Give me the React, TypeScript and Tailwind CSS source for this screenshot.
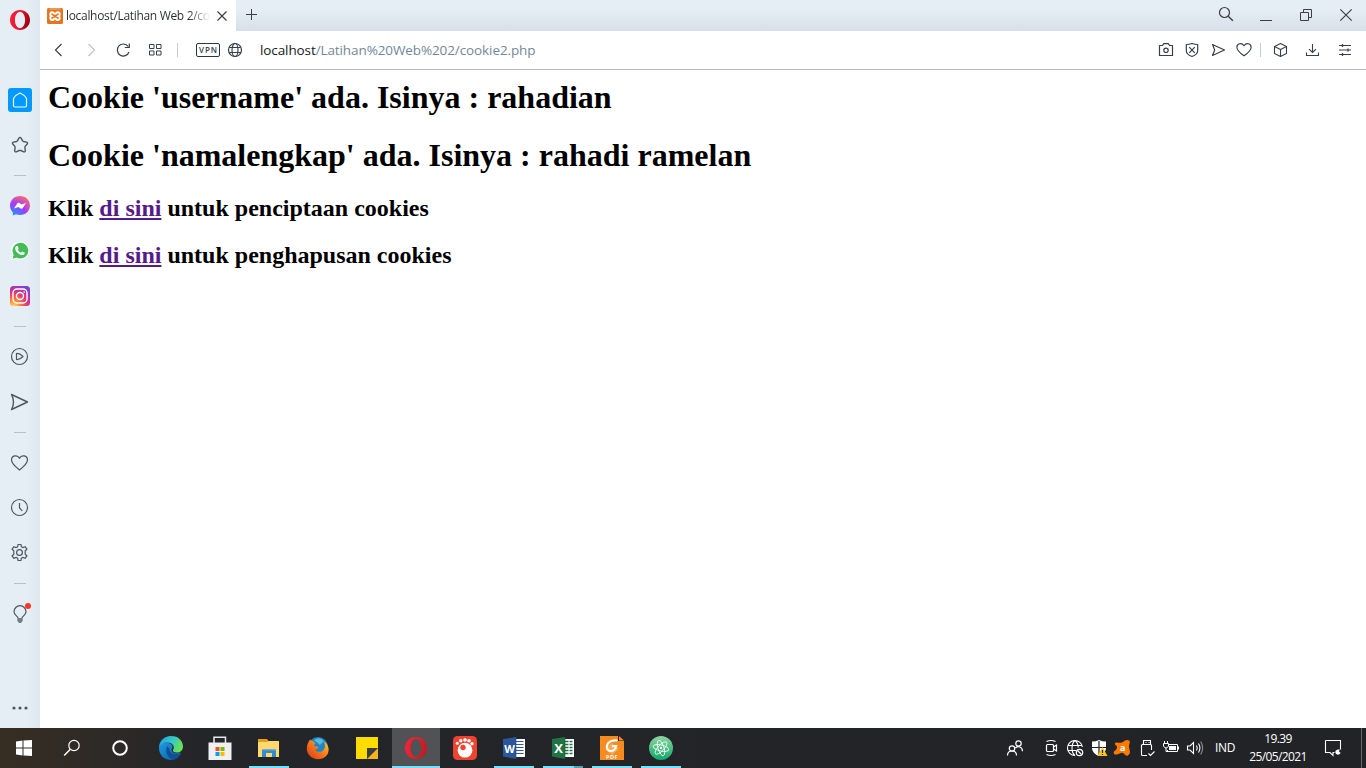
import React from "react";

type IconProps = { children: React.ReactNode; className?: string };

function Icon({ children, className = "" }: IconProps) {
  return (
    <svg width="24" height="24" viewBox="0 0 24 24" fill="none" stroke="currentColor" strokeWidth="1.2" className={`block shrink-0 ${className}`}>
      {children}
    </svg>
  );
}

function OperaLogo({ id, big = false }: { id: string; big?: boolean }) {
  return (
    <Icon>
      <defs>
        <linearGradient id={id} x1="0" y1="0" x2="1" y2="0.3">
          <stop offset="0" stopColor="#ff2038" />
          <stop offset="0.55" stopColor={big ? "#e3202c" : "#ec1530"} />
          <stop offset="1" stopColor={big ? "#c51a22" : "#a00414"} />
        </linearGradient>
      </defs>
      <path
        transform={big ? "translate(-1.2 -1.2) scale(1.1)" : undefined}
        stroke="none"
        fill={`url(#${id})`}
        fillRule="evenodd"
        d="M12 2C6.400 2 2 6.400 2 12s4.400 10 10 10 10-4.400 10-10S17.600 2 12 2Zm0 1.800c2.900 0 5.100 3.700 5.100 8.200s-2.200 8.200-5.100 8.200S6.900 16.500 6.900 12 9.100 3.800 12 3.800Z"
      />
    </Icon>
  );
}

const heart = "M12 18.200C7.500 15 4.500 12.200 4.500 9.100c0-4 5.200-5.100 7.500-1.400 2.300-3.700 7.500-2.600 7.500 1.400 0 3.100-3 5.900-7.500 9.100Z";

function Divider() {
  return <div className="my-[18px] h-px w-3 shrink-0 bg-[#b3c3d0]" />;
}

function Sidebar() {
  return (
    <aside className="flex w-10 shrink-0 flex-col items-center bg-gradient-to-r from-[#e5edf5] from-65% to-[#dfe7ef] pt-2 text-[#4d5762]">
      <OperaLogo id="operaSide" />
      <div className="mt-14 flex size-6 shrink-0 rounded-[3px] bg-[#0099ff] text-white">
        <Icon><path d="M5.500 10.500Q8 6.500 12 5q4 1.500 6.500 5.500v7q0 1.500-1.500 1.500H7q-1.500 0-1.500-1.500Z" strokeLinejoin="round" /></Icon>
      </div>
      <Icon className="mt-[21px]">
        <path strokeLinejoin="round" strokeWidth="1.400" d="M10.900 5.200q1.100-1.600 2.200 0l1.500 2.700q.3.500.9.600l3 .6q1.700.5.700 1.900l-2 2.400q-.4.500-.3 1l.4 3.200q0 1.700-1.600 1.200l-2.900-1.300q-.8-.3-1.600 0l-2.900 1.300q-1.600.5-1.600-1.200l.4-3.200q.1-.5-.3-1L4.800 11q-1-1.400.7-1.900l3-.6q.6-.1.900-.6Z" />
      </Icon>
      <Divider />
      <Icon>
        <defs>
          <radialGradient id="msg" cx="0.2" cy="1" r="1.1">
            <stop offset="0" stopColor="#159bff" />
            <stop offset="0.55" stopColor="#a13cff" />
            <stop offset="1" stopColor="#ff6969" />
          </radialGradient>
        </defs>
        <path stroke="none" fill="url(#msg)" d="M12 2C6.300 2 2 6.100 2 11.600c0 3 1.200 5.300 2.900 7v3l3-1.300c1.300.5 2.600.8 4.100.8 5.700 0 10-4.100 10-9.500S17.700 2 12 2Z" />
        <path stroke="none" fill="#fff" d="m6 14.600 3.200-5q1-1.400 2.300-.5l1.900 1.500L18 9l-3.200 5q-1 1.400-2.300.4l-1.900-1.400Z" />
      </Icon>
      <Icon className="mt-[21px]">
        <path stroke="none" fill="#fff" d="m2.900 21.300 1.300-5.200a9 9 0 1 1 3.700 3.600Z" />
        <path stroke="none" fill="#42bd55" d="m4.600 19.700 1-4a7.900 7.900 0 1 1 3 2.900Z" />
        <path stroke="none" fill="#fff" d="M8.500 7.100h1.200l1 2.400-.9 1.300c.8 1.400 1.900 2.400 3.400 3l1.100-1.300 2.500 1.200c-.2 2-1.600 2.600-3.100 2.300-3.600-.8-6.500-4.200-6.500-6.600 0-1 .6-2 1.300-2.300Z" />
      </Icon>
      <Icon className="mt-[21px]">
        <defs>
          <radialGradient id="insta" cx="0.2" cy="1" r="1.150">
            <stop offset="0" stopColor="#ffd65c" />
            <stop offset="0.3" stopColor="#ff7a35" />
            <stop offset="0.6" stopColor="#dc3181" />
            <stop offset="1" stopColor="#7145d9" />
          </radialGradient>
        </defs>
        <rect x="2" y="2" width="20" height="20" rx="3.500" stroke="none" fill="url(#insta)" />
        <g stroke="#fff" strokeWidth="1.400">
          <rect x="5" y="5" width="14" height="14" rx="4" />
          <circle cx="12" cy="12" r="3.500" />
          <path d="M15.500 8h1.300" />
        </g>
      </Icon>
      <Divider />
      <Icon>
        <circle cx="11.500" cy="11.500" r="8" />
        <path strokeLinejoin="round" d="M8.500 8.500q3-.5 6.500 3-3.500 3.500-6.500 3Z" />
      </Icon>
      <Icon className="mt-[21px]">
        <path strokeLinejoin="round" strokeWidth="1.400" d="m3.500 4.500 16 7.500-16 7.500q4-7.500 0-15Z" />
      </Icon>
      <Divider />
      <Icon>
        <path d="M11.500 19C7 15.500 3.500 12.500 3.500 9.100c0-4.700 6-5.900 8-1.800 2-4.100 8-2.900 8 1.800 0 3.400-3.500 6.400-8 9.900Z" strokeLinejoin="round" />
      </Icon>
      <Icon className="mt-[21px]">
        <circle cx="11.500" cy="11.500" r="8" />
        <path d="M11.500 7v5l2.800 2.800" />
      </Icon>
      <Icon className="mt-[21px]">
        <circle cx="11.500" cy="11.500" r="2.900" />
        <path strokeLinejoin="round" d="M9.700 5.700 10 3.500h3l.3 2.200 1.500.9 2.300-.9 1.800 2.500-1.700 1.500v3.600l1.700 1.500-1.800 2.500-2.300-.9-1.500.9-.3 2.200h-3l-.3-2.200-1.500-.9-2.300.9-1.800-2.500 1.700-1.500V9.700L4.100 8.200l1.800-2.500 2.300.9Z" />
      </Icon>
      <Divider />
      <Icon>
        <path d="M10 16C9.700 14.200 6 12.900 6 9.700a6 6 0 0 1 12 0c0 3.200-3.700 4.500-4 6.300" />
        <path stroke="none" fill="#737d87" d="M9.300 16h5.400v2.800L13 21h-2l-1.700-2.200Z" />
        <circle cx="20" cy="4" r="3" fill="#ff3528" stroke="none" />
      </Icon>
      <Icon className="mt-[70px]">
        <g stroke="none" fill="currentColor"><circle cx="6" cy="12" r="1.600" /><circle cx="12" cy="12" r="1.600" /><circle cx="18" cy="12" r="1.600" /></g>
      </Icon>
    </aside>
  );
}

function TabBar() {
  return (
    <div className="flex h-[31px] bg-gradient-to-b from-[#e5edf5] from-30% to-[#d7e0e8] text-[#3b4045]">
      <div className="flex h-[31px] w-[196px] items-center bg-white pl-[7px]">
        <svg width="16" height="16" viewBox="0 0 16 16" className="block shrink-0">
          <rect width="16" height="16" rx="1.500" fill="#e97420" />
          <path d="M2.500 1h11" stroke="#f5b98b" />
          <path d="M5 4.300c2 0 1.600 1.500 3 1.500s1-1.500 3-1.500 2.500 3 .4 3.900c2.100.9 1.600 3.900-.4 3.900s-1.600-1.500-3-1.500-1 1.500-3 1.500-2.500-3-.4-3.900C2.500 7.300 3 4.300 5 4.300Z" fill="none" stroke="#fff" strokeWidth="2" />
        </svg>
        <div className="ml-[3px] w-36 overflow-hidden bg-gradient-to-r from-[#292d31] from-85% to-white bg-clip-text font-['Open_Sans',sans-serif] text-[12px] tracking-[-0.32px] whitespace-nowrap text-transparent">localhost/Latihan Web 2/co</div>
        <Icon><path d="m7.500 7.500 9 9m0-9-9 9" /></Icon>
      </div>
      <Icon className="mt-[3px] ml-[3px]"><path strokeWidth="1" d="M12.500 6v11M7 11.500h11" /></Icon>
      <div className="ml-auto flex gap-4 pt-[3px] pr-2">
        <Icon><circle cx="10.500" cy="9.500" r="5" /><path d="m14.200 13.200 4.700 4.600" strokeWidth="1.500" /></Icon>
        <Icon><path strokeWidth="1" d="M6 17.500h12" /></Icon>
        <Icon><path strokeWidth="1" d="M6.500 9.500h8v8h-8ZM9.500 9.500v-3h8v8h-3" /></Icon>
        <Icon><path d="m6.300 6.300 11.400 11.400m0-11.400L6.300 17.700" /></Icon>
      </div>
    </div>
  );
}

function Toolbar() {
  return (
    <div className="flex h-[39px] items-center border-b border-[#b3bdc6] bg-white pr-[9px] pl-[7px] text-[#35404a]">
      <Icon><path d="m14.500 6-6 6 6 6" /></Icon>
      <Icon className="ml-2 text-[#bfc4c9]"><path d="m9.500 6 6 6-6 6" /></Icon>
      <Icon className="ml-2"><path d="M17.200 8.500A6 6 0 1 0 18 14M18.300 5.500v4h-4.500" /></Icon>
      <Icon className="ml-2"><path strokeWidth="1" d="M6.500 6.500H11v4H6.500ZM13.500 6.500h4.500v4h-4.500ZM6.500 13H11v4H6.500ZM13.500 13h4.500v4h-4.500Z" /></Icon>
      <div className="ml-2.5 h-3.5 w-px bg-[#c8cdd2]" />
      <div className="ml-[18px] flex h-3.5 w-6 items-center justify-center rounded-[2px] border border-[#2b3742] pl-px font-['Open_Sans',sans-serif] text-[8px] leading-none font-semibold tracking-[1px]">VPN</div>
      <Icon className="ml-[3px]">
        <circle cx="12" cy="12" r="6.500" />
        <ellipse cx="12" cy="12" rx="3" ry="6.500" />
        <path d="M6.300 9.500h11.400M6.300 14.500h11.400" />
      </Icon>
      <div className="ml-[13px] pt-px font-['Open_Sans',sans-serif] text-[13.5px] tracking-[-0.1px] whitespace-nowrap text-[#758797]"><span className="text-[#16191c]">localhost</span>/Latihan%20Web%202/cookie2.php</div>
      <div className="ml-auto flex items-center">
        <Icon><path d="M5.500 7.500h3l1.200-1.800h4.600l1.200 1.800h3V17.500h-13Z" strokeLinejoin="round" /><circle cx="12" cy="12.300" r="2.200" /></Icon>
        <Icon className="ml-0.5"><path strokeLinejoin="round" d="M12 5.500q3 1 5.700 1v6q0 4-5.700 6-5.700-2-5.700-6v-6q2.700 0 5.700-1Z" /><path d="m9.200 9.200 5.600 5.600m0-5.600-5.600 5.600" /></Icon>
        <Icon className="ml-0.5"><path strokeLinejoin="round" d="m6.500 6.500 12 5.500-12 5.500L8.700 12Z" /></Icon>
        <Icon className="ml-0.5"><path strokeLinejoin="round" d={heart} transform="translate(.6 .5) scale(.95)" /></Icon>
        <div className="mr-2 ml-1 h-3.5 w-px bg-[#c8cdd2]" />
        <Icon><path strokeLinejoin="round" strokeWidth="1.100" d="m11.500 5.500 6 3v7l-6 3-6-3v-7ZM5.500 8.500l6 3 6-3M11.500 11.500v7" /></Icon>
        <Icon className="ml-[7px]"><path strokeWidth="1.100" d="M12.500 6v8.500m-3.500-3.300 3.500 3.300 3.500-3.300M6.500 14.500v3h12v-3" /></Icon>
        <Icon className="ml-[9px]"><path strokeWidth="1" d="M6 7.500h12M6 12h12M6 16.500h12" /><path strokeWidth="1.300" d="M9.500 6v3M15 10.500v3M9.500 15v3" /></Icon>
      </div>
    </div>
  );
}

type AppCellProps = { children: React.ReactNode; line?: "short" | "full" | "split"; active?: boolean };

function AppCell({ children, line, active }: AppCellProps) {
  return (
    <div className={`flex h-10 w-12 shrink-0 flex-col items-center pt-2 ${active ? "bg-[#505255]" : ""}`}>
      {children}
      {line === "short" && <div className="mt-1.5 h-0.5 w-10 bg-[#76e0fb]" />}
      {line === "full" && <div className="mt-1.5 h-0.5 w-12 bg-[#76e0fb]" />}
      {line === "split" && <div className="mt-1.5 flex h-0.5 w-10 bg-[#5b9fb1]"><div className="w-[31px] bg-[#76e0fb]" /></div>}
    </div>
  );
}

function OfficeIcon({ color, dark, letter, sheet }: { color: string; dark: string; letter: string; sheet?: boolean }) {
  return (
    <Icon>
      <path stroke="none" fill="#fff" d="M14 3h9v18h-9Z" />
      <path stroke={color} strokeWidth={sheet ? 1.5 : 1.1} d="M14 5.500h7.500M14 8.500h7.500M14 11.500h7.500M14 14.500h7.500M14 17.500h7.500" />
      {sheet && <path stroke="#fff" strokeWidth="1" d="M18 4v16" />}
      <path stroke="none" fill={color} d="M1 3 14 1v22L1 20.500Z" />
      <path stroke={dark} strokeWidth=".6" d="M14 1v22" />
      <text x="7.500" y="16.500" textAnchor="middle" stroke="none" fill="#fff" fontFamily="Open Sans, sans-serif" fontWeight="700" fontSize={sheet ? 13 : 11}>{letter}</text>
    </Icon>
  );
}

function Taskbar() {
  return (
    <footer className="flex h-10 shrink-0 bg-gradient-to-r from-[#372e23] via-[#242529] via-15% to-[#222326] text-white">
      <AppCell><Icon><path stroke="none" fill="#fff" d="m4 5.500 6.500-1v7H4ZM11.500 4.400 20 4v7.500h-8.500ZM4 12.500h6.500v7l-6.500-1ZM11.500 12.500H20V20l-8.500-.5Z" /></Icon></AppCell>
      <AppCell><Icon><circle cx="14" cy="9.500" r="5.200" /><path d="M10.300 13.200 4.200 19.500" strokeWidth="1.500" /></Icon></AppCell>
      <AppCell><Icon><circle cx="12" cy="12" r="6.800" strokeWidth="2" /></Icon></AppCell>
      <div className="ml-[3px] flex gap-px">
        <AppCell>
          <Icon>
            <defs>
              <linearGradient id="edgeTop" x1="0" y1="0.2" x2="1" y2="0.6"><stop stopColor="#239de5" /><stop offset=".5" stopColor="#35c9c9" /><stop offset="1" stopColor="#70e34a" /></linearGradient>
              <linearGradient id="edgeLow" x1="0" y1="0" x2="1" y2="1"><stop stopColor="#1b9de2" /><stop offset="1" stopColor="#0c59a4" /></linearGradient>
            </defs>
            <path stroke="none" fill="url(#edgeLow)" d="M0 12C1 6 7 5.500 11 7.500c3 1.500 3 3.500 2 5-2 4 4 6 9 4C20 21 16 24 12 24 5 24 0 19 0 12Z" />
            <path stroke="none" fill="#104f93" d="M8.500 10C5.500 14 8 22 14 23.800c4-.6 7-3.500 8.500-6.800-6 3-12 .5-12-4Z" />
            <path stroke="none" fill="url(#edgeTop)" d="M0 12C0 5 5 0 12 0c7.500 0 12 5 12 10.500 0 4-3 6.500-7 6-3-.4-3.500-1.800-2.600-3.200C16 10 13 6.500 8.500 6.500 4 6.500 1 8.500 0 12Z" />
          </Icon>
        </AppCell>
        <AppCell>
          <Icon>
            <path stroke="#e9e9e9" d="M6 7V1.200h11.500V7" strokeWidth="1.500" />
            <path stroke="none" fill="#f0f0f0" d="M.5 6.500h23V24H.5Z" />
            <path stroke="none" fill="#f25022" d="M7.500 11h4v4h-4Z" /><path stroke="none" fill="#7fba00" d="M12.500 11h4v4h-4Z" />
            <path stroke="none" fill="#00a4ef" d="M7.500 16h4v4h-4Z" /><path stroke="none" fill="#ffb900" d="M12.500 16h4v4h-4Z" />
          </Icon>
        </AppCell>
        <AppCell line="short">
          <Icon>
            <path stroke="none" fill="#ffd86f" d="M1 5h21v16H1Z" /><path stroke="none" fill="#e2a018" d="M1 3h9l1.500 2L10 6H1Z" />
            <path stroke="none" fill="#318bd2" d="M5 13.500h14V21h-4v-4H9v4H5Z" />
            <path stroke="#53a9e5" strokeWidth="1" d="M5 14h14" />
          </Icon>
        </AppCell>
        <AppCell>
          <Icon>
            <defs><linearGradient id="fox" x1="0" y1="1" x2="1" y2="0"><stop stopColor="#d93118" /><stop offset=".5" stopColor="#f5791c" /><stop offset="1" stopColor="#ffd12c" /></linearGradient></defs>
            <circle cx="12" cy="11" r="10" fill="#2085c5" stroke="none" />
            <path stroke="none" fill="#55bbdf" d="M8 4q6-4 10 1l-4 4Z" />
            <path stroke="none" fill="url(#fox)" d="M4 3.500q1 1.500 3.500 1.800l2 2.200-1.800 2 2 1 3.300.2-2 2.300-2 .7c1 2 5.500 3 8 .8 3-3 2-6 1-9 4 2.500 5.600 7 4.200 11-1.300 4-5.200 6.700-10 6.700C5.500 23.200.8 18.500.8 12.500.8 9 2.200 6.200 4 3.500Z" />
          </Icon>
        </AppCell>
        <AppCell>
          <Icon><path stroke="none" fill="#ffdc00" d="M1 1h22v11H12v11H1Z" /><path stroke="none" fill="#3b3d42" d="M12 12h11L12 23Z" /><path stroke="none" fill="#f4b51d" d="M23 12v11H12Z" /></Icon>
        </AppCell>
        <AppCell line="full" active><OperaLogo id="operaTask" big /></AppCell>
        <AppCell>
          <Icon>
            <rect width="24" height="24" rx="4.500" fill="#ee432e" stroke="none" />
            <g fill="#fff" stroke="none"><circle cx="12" cy="14.200" r="7.400" /><circle cx="4.300" cy="7.200" r="1.500" /><circle cx="7.800" cy="4.700" r="1.700" /><circle cx="12" cy="4" r="1.800" /><circle cx="16" cy="4.800" r="1.800" /><circle cx="19" cy="7.800" r="1.700" /></g>
            <circle cx="10" cy="11.500" r="2.700" fill="#ee432e" stroke="none" />
          </Icon>
        </AppCell>
        <AppCell line="short"><OfficeIcon color="#2b579a" dark="#1d4484" letter="W" /></AppCell>
        <AppCell line="split"><OfficeIcon color="#217346" dark="#17552f" letter="X" sheet /></AppCell>
        <AppCell line="short">
          <Icon>
            <path stroke="none" fill="#f78b20" d="M0 0h18v5h6v19H0Z" /><path stroke="none" fill="#f78b20" d="m19 0 5 4.500h-5Z" />
            <path stroke="none" fill="#faaa59" d="m12 7 7 6-7 6-7-6Z" />
            <path stroke="#fff" strokeWidth="2.200" d="M17.500 4.500C11 3.500 6.800 7 6.800 11c0 5 7.600 6 9.400-1H12" />
            <text x="12" y="22.800" textAnchor="middle" stroke="none" fill="#fff" fontFamily="Open Sans, sans-serif" fontWeight="700" fontSize="5.500" letterSpacing=".5">PDF</text>
          </Icon>
        </AppCell>
        <AppCell line="short">
          <Icon>
            <defs><linearGradient id="atom" x1="0" y1="0" x2="0" y2="1"><stop stopColor="#8dd5a0" /><stop offset="1" stopColor="#10a86b" /></linearGradient></defs>
            <circle cx="12" cy="12" r="12" fill="url(#atom)" stroke="none" />
            <g stroke="#edfff3" strokeWidth=".9"><ellipse cx="12" cy="12" rx="3" ry="8" transform="rotate(-17 12 12)" /><ellipse cx="12" cy="12" rx="3" ry="8" transform="rotate(43 12 12)" /><ellipse cx="12" cy="12" rx="3" ry="8" transform="rotate(103 12 12)" /></g>
            <circle cx="12" cy="12" r="1.200" fill="#fff" stroke="none" />
          </Icon>
        </AppCell>
      </div>
      <div className="ml-auto flex h-10 items-center">
        <Icon className="mr-3"><circle cx="9" cy="12.500" r="2.700" /><circle cx="15.500" cy="7.500" r="2.700" /><path d="M4.500 19.500c0-6 9-6 9 0M12.200 12.200c2.700-3 7.300-1.200 7.300 3" /></Icon>
        <Icon><rect x="7.500" y="8.500" width="7" height="7" rx="1" /><path d="m14.500 11 3-2v6l-3-2M7.500 5.500q4.500-2 9 0M7.500 18.500q4.500 2 9 0" /></Icon>
        <Icon><path strokeWidth="1.100" d="M12 19.500A7.500 7.500 0 1 1 19.400 11M4.800 9.500h14.400M4.800 14.500H13M12 4.500c-4 3-4 12 0 15M12 4.500c2.500 2 3.200 4 3.200 7" /><circle cx="16.500" cy="16.500" r="3.200" /><path d="m14.500 14.500 4 4" /></Icon>
        <Icon>
          <path fill="#fff" stroke="none" d="M12 4q3 1.500 7 1.500V12c0 4-4 7-7 8-3-1-7-4-7-8V5.500Q9 5.500 12 4Z" /><path stroke="#222326" strokeWidth="1.200" d="M12 5v14M5 11.500h14" />
          <path fill="#ffc31f" stroke="none" d="m15.500 11 5 9h-10Z" /><path stroke="#222" d="M15.500 14v3M15.500 18v1" />
        </Icon>
        <Icon className="-ml-px">
          <path fill="#ff7800" stroke="none" d="M5 8q-.5-2 2-1.500 3 .8 5.500-.2L15 4.500q2.500-1.200 4.500.2.800 1.300 0 3-.9 2-.3 4.300l.8 4q0 3-2.500 3.700-2 .3-3.500-2-1-1.200-3-.8l-4 1.600q-3 .5-3.400-1.500-.1-1.500 1.900-2.700 1.500-1 1.500-3 0-1-.8-1.800Q5 9 5 8Z" />
          <text x="12.500" y="15.300" textAnchor="middle" fill="#fff" stroke="none" fontFamily="Open Sans, sans-serif" fontWeight="700" fontSize="9.500">a</text>
        </Icon>
        <Icon className="ml-px"><path strokeWidth="1.100" d="M8.500 8.500v-4h7v4M7.500 19.500q-1 0-1-1v-9q0-1 1-1h8q1 0 1 1V14M7.500 19.500H12M13.500 17.500l2 2 4-4M10.500 6.500h1m2 0h1" /></Icon>
        <Icon><path strokeWidth="1" d="M10 8.500h8.500v7h-10V14" /><path d="M10 10h7v4h-7Z" fill="#fff" stroke="none" /><path strokeWidth="1" d="M19.500 10.500v3M5.500 5v3M8.500 5v3M4.500 7.500h5V10q-1 2-2.500 2t-2.500-2ZM7 12v3.500h2" /></Icon>
        <Icon><path strokeWidth="1.100" d="M4.500 10v4h2.500l3.500 3.500v-11L7 10ZM13.500 9.500q1.500 2.500 0 5M15.500 7.500q2.800 4.500 0 9" /><path d="M17.700 5.500q3.800 6.500 0 13" stroke="#85888b" /></Icon>
        <div className="ml-2 w-5 font-['Open_Sans',sans-serif] text-[12px] tracking-[-0.3px]">IND</div>
        <div className="ml-2.5 w-[66px] pb-px text-center font-['Open_Sans',sans-serif] text-[12px] leading-[18px] tracking-[-0.6px] whitespace-nowrap"><div>19.39</div><div>25/05/2021</div></div>
        <Icon className="ml-2.5"><path strokeWidth="1.100" d="M4.500 4.500h15v9M4.500 4.500v12h4.500l3 3v-3h1.500" /><path d="M18.800 13.500c-3.800-.5-5.300 2-4 4s4.700 1.200 4.700-1c-1.700 0-1.800-1.300-.7-3Z" fill="#fff" stroke="none" /></Icon>
        <div className="mr-1 ml-4 h-10 w-px bg-[#66676a]" />
      </div>
    </footer>
  );
}

function Page() {
  return (
    <main className="flex-1 bg-white px-2 pt-[9px] font-['Liberation_Serif',serif] font-bold text-black">
      <h1 className="h-[37px] text-[32px] leading-[37px] whitespace-nowrap">Cookie 'username' ada. Isinya : rahadian</h1>
      <h1 className="mt-[21px] h-[37px] text-[32px] leading-[37px] whitespace-nowrap">Cookie 'namalengkap' ada. Isinya : rahadi ramelan</h1>
      <h2 className="mt-[21px] text-2xl leading-[27px]">Klik <a className="text-[#551a8b] underline">di sini</a> untuk penciptaan cookies</h2>
      <h2 className="mt-5 text-2xl leading-[27px]">Klik <a className="text-[#551a8b] underline">di sini</a> untuk penghapusan cookies</h2>
    </main>
  );
}

export default function App() {
  return (
    <div className="flex h-screen w-full flex-col overflow-hidden bg-white">
      <div className="flex min-h-0 flex-1">
        <Sidebar />
        <div className="flex min-w-0 flex-1 flex-col">
          <TabBar />
          <Toolbar />
          <Page />
        </div>
      </div>
      <Taskbar />
    </div>
  );
}
